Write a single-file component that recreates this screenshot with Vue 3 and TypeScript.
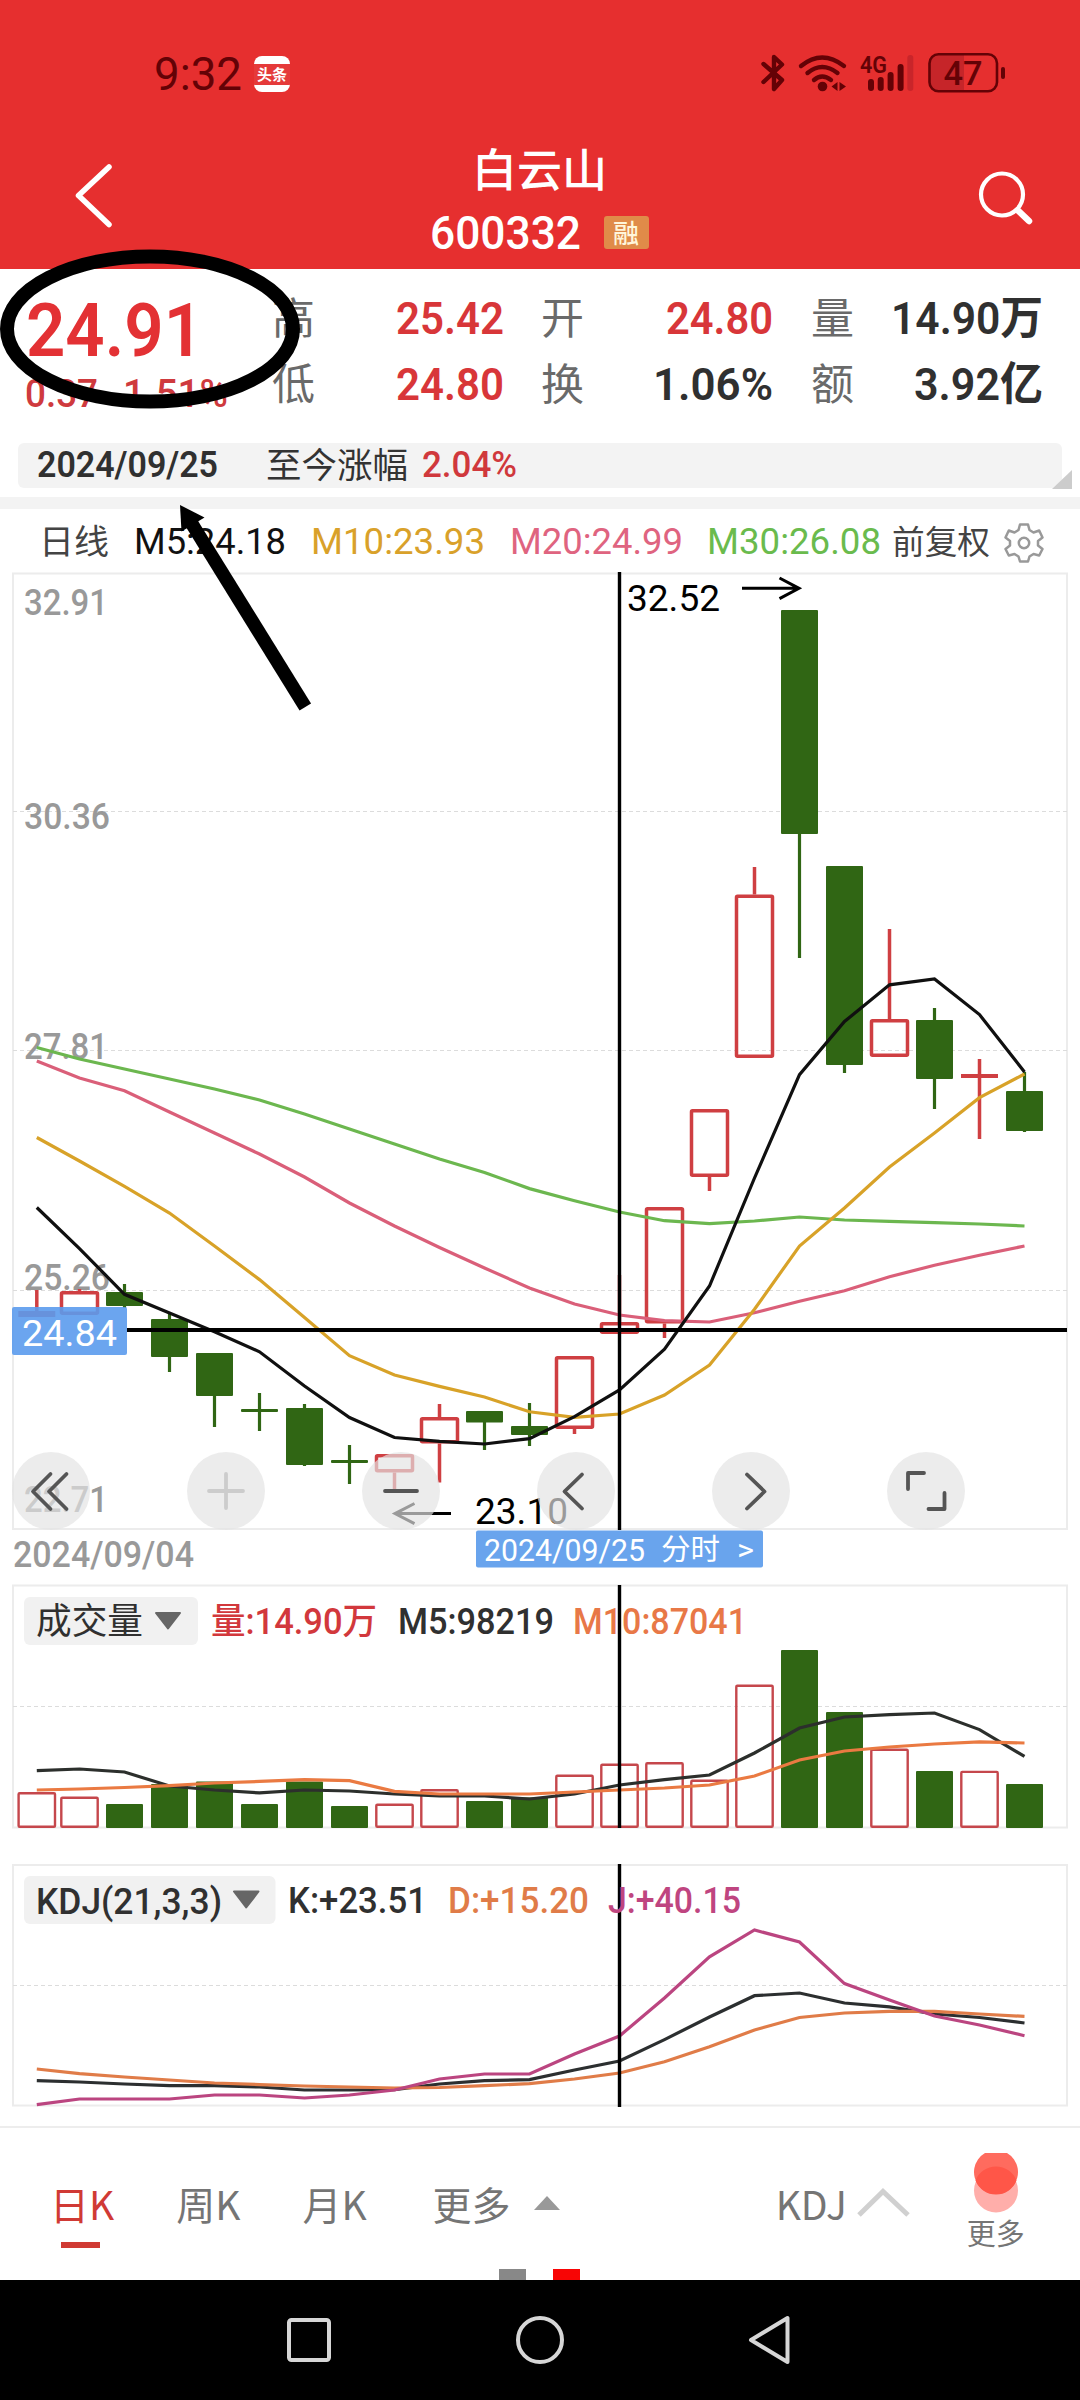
<script setup lang="ts">
import { h, type FunctionalComponent } from 'vue'

interface FitProps { text: string; size: number; w: number; weight?: number; color?: string }

// Single line of text set to an exact advance width; the box bottom is the baseline.
const FitText: FunctionalComponent<FitProps> = (p) =>
  h('svg', { width: p.w, height: Math.round(p.size * 0.72), style: 'display:block;overflow:visible;flex:none' }, [
    h('text', {
      x: 0, y: Math.round(p.size * 0.72), 'font-size': p.size, 'font-weight': p.weight ?? 500,
      fill: p.color ?? '#333', textLength: p.w, lengthAdjust: 'spacingAndGlyphs',
    }, p.text),
  ])
FitText.props = ['text', 'size', 'w', 'weight', 'color']

const RED = '#d83639'
const INK = '#303030'

interface Cell { label: string; text: string; w: number; color: string }
const quotes: Cell[][] = [
  [{ label: '高', text: '25.42', w: 108, color: RED }, { label: '低', text: '24.80', w: 108, color: RED }],
  [{ label: '开', text: '24.80', w: 107, color: RED }, { label: '换', text: '1.06%', w: 120, color: INK }],
  [{ label: '量', text: '14.90万', w: 152, color: INK }, { label: '额', text: '3.92亿', w: 129, color: INK }],
]

const legend = [
  { text: '日线', size: 34, w: 70, color: '#444', gap: 39 },
  { text: 'M5:24.18', size: 36, w: 152, color: '#111', gap: 25 },
  { text: 'M10:23.93', size: 36, w: 174, color: '#d9a12a', gap: 25 },
  { text: 'M20:24.99', size: 36, w: 173, color: '#df6480', gap: 25 },
  { text: 'M30:26.08', size: 36, w: 174, color: '#6abb4d', gap: 24 },
  { text: '前复权', size: 33, w: 98, color: '#444', gap: 11 },
]

const cx = (i: number) => (i === 0 ? 36.8 : 34.5 + 45 * i)
const pts = (ys: number[]) => ys.map((y, i) => `${cx(i)},${y}`).join(' ')

// [up, body top, body bottom, wick top, wick bottom]
type Candle = [boolean, number, number, number, number]
const candles: Candle[] = [
  [true, 1311, 1317, 1290, 1317], [true, 1291, 1315, 1289, 1315], [false, 1292, 1306, 1284, 1308],
  [false, 1319, 1357, 1313, 1372], [false, 1353, 1396, 1353, 1427], [false, 1409, 1412, 1393, 1431],
  [false, 1408, 1465, 1404, 1466], [false, 1460, 1463, 1445, 1484], [true, 1454, 1472.5, 1454, 1491],
  [true, 1417, 1443.5, 1404, 1482.5], [false, 1411, 1422.5, 1411, 1450], [false, 1426, 1435, 1403, 1446],
  [true, 1356, 1429, 1356, 1434], [true, 1322, 1334, 1275, 1334], [true, 1207, 1323.5, 1207, 1338],
  [true, 1109, 1177, 1109, 1191], [true, 894.5, 1058, 867, 1058], [false, 610, 834, 610, 958],
  [false, 866, 1065, 866, 1073], [true, 1019, 1057, 929, 1057], [false, 1020, 1079, 1008, 1109],
  [true, 1074, 1078, 1059, 1139], [false, 1091, 1131, 1072, 1132],
]

const ma = [
  { color: '#6cb74f', ys: [1047.5, 1059, 1069, 1079, 1089, 1100, 1114, 1129, 1144, 1159, 1172.5, 1188.6, 1200.7, 1212, 1220.7, 1223.7, 1221, 1217, 1220, 1221.3, 1222.7, 1224, 1226] },
  { color: '#da5f79', ys: [1061, 1078, 1090.7, 1112, 1133, 1154, 1177, 1203, 1226, 1247.5, 1268, 1288, 1304, 1315, 1320.7, 1322, 1312.7, 1301.3, 1290.7, 1276.7, 1265.3, 1255.3, 1246] },
  { color: '#d8a228', ys: [1137.5, 1161, 1186.4, 1213, 1246, 1279.6, 1317.5, 1355.7, 1375, 1386.4, 1397, 1411.8, 1417.3, 1414, 1395, 1365, 1309.3, 1246, 1208, 1167, 1133, 1097.7, 1074] },
  { color: '#101010', ys: [1207.5, 1248.6, 1294.3, 1313, 1331.8, 1351.8, 1386, 1417.5, 1437.5, 1441.4, 1444, 1438.6, 1416.7, 1390, 1349.3, 1286, 1178, 1074.7, 1021.5, 984.8, 979, 1014.6, 1072] },
]

const volTops = [1792, 1796.5, 1804, 1784, 1781.5, 1804, 1781.5, 1806, 1803.5, 1789, 1801, 1797.5, 1774.6, 1763.6, 1762, 1779.6, 1684.6, 1650, 1712, 1748.6, 1771, 1770.7, 1784]
const volLines = [
  { color: '#2c2f2c', ys: [1770.7, 1769, 1772, 1786, 1790, 1792.9, 1790, 1791, 1794, 1796, 1796, 1799, 1794, 1785, 1779.6, 1775, 1753, 1728, 1717, 1714.6, 1713, 1729.6, 1756.4] },
  { color: '#ea7a42', ys: [1790, 1789, 1787.5, 1785.7, 1783, 1781.4, 1779.6, 1780.7, 1791.4, 1794, 1794, 1794, 1792, 1790, 1788, 1785, 1776, 1760, 1751, 1747, 1744, 1741.8, 1743] },
]

const kdjLines = [
  { color: '#2c2f30', ys: [2080.7, 2082, 2084, 2085.7, 2085.7, 2087, 2090, 2090, 2089.6, 2084, 2080.7, 2079.6, 2070, 2061, 2039.6, 2017, 1995.7, 1993, 2003, 2006.8, 2014, 2017.5, 2023] },
  { color: '#e07c48', ys: [2069, 2073.6, 2077, 2080, 2083, 2084.6, 2086, 2087, 2088, 2087.5, 2085.7, 2083.6, 2079, 2073, 2061.8, 2046.8, 2030, 2017.5, 2013, 2011.4, 2011.4, 2014, 2016.4] },
  { color: '#bb4580', ys: [2104.6, 2099, 2099, 2099, 2095, 2095, 2098, 2095, 2090, 2079, 2074, 2074, 2054, 2036, 1998, 1956.8, 1930, 1942, 1983.6, 2000, 2016, 2025, 2035.7] },
]

interface Label { x: number; y: number; w: number; t: string }
const axis: Label[] = [
  { x: 24, y: 615, w: 84, t: '32.91' },
  { x: 24, y: 829, w: 86, t: '30.36' },
  { x: 24, y: 1059, w: 84, t: '27.81' },
  { x: 24, y: 1290, w: 86, t: '25.26' },
  { x: 24, y: 1512, w: 84, t: '22.71' },
]
const buttons = [51, 226, 401, 576, 751, 926]
</script>

<template>
  <div class="screen">
    <header class="top">
      <div class="status">
        <FitText text="9:32" :size="46" :w="88" :weight="400" color="#640206" />
        <span class="app-badge"><i>头条</i></span>
        <svg class="sys" width="250" height="40" viewBox="758 53 250 40" fill="none" stroke="#640206" stroke-linecap="round" stroke-linejoin="round">
          <path d="M763.5 64 L782 80 L774 89 V57 L782 64.5 L763.5 82" stroke-width="4.4" />
          <g stroke-width="4.4">
            <path d="M801 66 Q822 49 844 66" />
            <path d="M807.500 73 Q822 61 837.500 73" />
            <path d="M814 80 Q822 73 831 80" />
          </g>
          <circle cx="822.500" cy="86.500" r="4.800" fill="#640206" stroke="none" />
          <path d="M837.500 82 v9 l-6 -4.500z M839.500 82 v9 l6.500 -4.500z" fill="#640206" stroke="none" />
          <text x="860" y="73" font-size="24" font-weight="600" textLength="27" lengthAdjust="spacingAndGlyphs" fill="#640206" stroke="none">4G</text>
          <g stroke-width="6">
            <path d="M871 82V88 M880.700 80V88 M890.600 75V88 M900.600 67V88" />
            <path d="M910.300 58V88" stroke="#c9252a" />
          </g>
          <path d="M939 55h25v36h-25q-9 0-9-9v-18q0-9 9-9z" fill="#c62529" stroke="none" />
          <rect x="929.500" y="54.300" width="67.500" height="37" rx="9" stroke-width="2.600" />
          <path d="M1003 69V77" stroke-width="4" />
          <text x="943.500" y="85" font-size="33" font-weight="500" textLength="39" lengthAdjust="spacingAndGlyphs" fill="#640206" stroke="none">47</text>
        </svg>
      </div>
      <div class="navbar">
        <svg class="back" width="44" height="70" viewBox="72 160 44 70"><path d="M109 167 L78.500 195.500 L109 224.500" fill="none" stroke="#fff" stroke-width="5.500" stroke-linecap="round" stroke-linejoin="round" /></svg>
        <div class="title">
          <div class="name">白云山</div>
          <div class="code">
            <FitText text="600332" :size="46" :w="151" :weight="500" color="#fff" />
            <span class="tag">融</span>
          </div>
        </div>
        <svg class="search" width="60" height="60" viewBox="976 168 60 60" fill="none" stroke="#fff" stroke-linecap="round"><circle cx="1002" cy="194.500" r="21" stroke-width="4.200" /><path d="M1018 210.500 L1029 221" stroke-width="6.500" /></svg>
      </div>
    </header>

    <section class="quote">
      <div class="price">
        <FitText text="24.91" :size="75" :w="177" :weight="600" color="#e33134" />
        <div class="change">
          <FitText text="0.37" :size="38" :w="73" color="#cf3a3e" />
          <FitText text="1.51%" :size="38" :w="105" color="#cf3a3e" />
        </div>
      </div>
      <div v-for="(col, i) in quotes" :key="i" class="pair">
        <div v-for="c in col" :key="c.label" class="cell">
          <FitText :text="c.label" :size="43" :w="43" :weight="400" color="#6a6a6a" />
          <FitText :text="c.text" :size="45" :w="c.w" :weight="600" :color="c.color" />
        </div>
      </div>
    </section>

    <section class="since">
      <div class="strip">
        <FitText text="2024/09/25" :size="36" :w="181" :weight="600" color="#303030" />
        <FitText text="至今涨幅" :size="35" :w="142" :weight="400" color="#333" />
        <FitText text="2.04%" :size="36" :w="95" color="#d0383c" />
      </div>
      <i class="corner"></i>
    </section>
    <div class="divider"></div>

    <div class="legend">
      <FitText v-for="l in legend" :key="l.text" :text="l.text" :size="l.size" :w="l.w" :weight="400" :color="l.color" :style="{ marginLeft: l.gap + 'px' }" />
      <svg class="gear" width="42" height="42" viewBox="-21 -21 42 42" fill="none" stroke="#999" stroke-width="2.500" stroke-linejoin="round">
        <path d="M-4 -18.500 H4 L5.500 -13 L9.500 -10.500 L15.200 -12.500 L18.500 -5.500 L14 -2 V2.500 L18.500 6 L15.200 12.500 L9.500 11 L5.500 13.500 L4 18.500 H-4 L-5.500 13.500 L-9.500 11 L-15.200 12.500 L-18.500 6 L-14 2.500 V-2 L-18.500 -5.500 L-15.200 -12.500 L-9.500 -10.500 L-5.500 -13 Z" />
        <circle r="5.200" />
      </svg>
    </div>

    <svg class="panel" width="1080" height="1008" viewBox="0 569 1080 1008">
      <rect x="13" y="573.500" width="1054" height="955.500" fill="none" stroke="#ececec" stroke-width="2" />
      <path class="grid" d="M13 811.500H1067 M13 1050.500H1067 M13 1290.500H1067" />
      <text v-for="a in axis" :key="a.t" class="fit md" :x="a.x" :y="a.y" font-size="36" :textLength="a.w" lengthAdjust="spacingAndGlyphs" fill="#999">{{ a.t }}</text>
      <g v-for="(c, i) in candles" :key="i">
        <template v-if="c[0]">
          <path :d="`M${cx(i)} ${c[3]}V${c[1]} M${cx(i)} ${c[2]}V${c[4]}`" stroke="#cf3f42" stroke-width="3.500" />
          <rect v-if="c[2] - c[1] < 8" :x="cx(i) - 18.500" :y="c[1]" width="37" :height="c[2] - c[1]" fill="#cf3f42" />
          <rect v-else :x="cx(i) - 18" :y="c[1] + 1.700" width="36" :height="c[2] - c[1] - 3.400" rx="1" fill="none" stroke="#cf3f42" stroke-width="3.500" />
        </template>
        <template v-else>
          <path :d="`M${cx(i)} ${c[3]}V${c[4]}`" stroke="#306614" stroke-width="3.200" />
          <rect :x="cx(i) - 18.500" :y="c[1]" width="37" :height="c[2] - c[1]" rx="1" fill="#306614" />
        </template>
      </g>
      <polyline v-for="m in ma" :key="m.color" :points="pts(m.ys)" fill="none" :stroke="m.color" stroke-width="3.200" />

      <text class="fit" x="627" y="610.500" font-size="37" textLength="93" lengthAdjust="spacingAndGlyphs" fill="#000">32.52</text>
      <path d="M742 588.300H799 M779.500 578L799 588.300L779.500 598.600" fill="none" stroke="#000" stroke-width="3" />
      <text class="fit" x="475" y="1524" font-size="37" textLength="93" lengthAdjust="spacingAndGlyphs" fill="#000">23.10</text>
      <path d="M451 1513.600H395 M414.500 1503.500L395 1513.600L414.500 1523.700" fill="none" stroke="#000" stroke-width="3" />

      <path d="M127 1330H1067" stroke="#000" stroke-width="3.800" />
      <path d="M619.500 572V1530" stroke="#000" stroke-width="3.400" />
      <rect x="12" y="1307" width="115" height="48" rx="2" fill="#5b9bed" fill-opacity=".9" />
      <text class="fit" x="22" y="1345.500" font-size="37" textLength="95" lengthAdjust="spacingAndGlyphs" fill="#fff">24.84</text>

      <circle v-for="b in buttons" :key="b" :cx="b" cy="1491" r="39" fill="#e3e3e3" fill-opacity=".68" />
      <g fill="none" stroke="#555" stroke-width="3.800" stroke-linecap="round" stroke-linejoin="round">
        <path d="M50.500 1474L33 1491.500L50.500 1509 M66.500 1474L49 1491.500L66.500 1509" />
        <path d="M209 1491H243 M226 1474V1508" stroke="#ccc" />
        <path d="M385 1491H417" />
        <path d="M582 1474.500L564.500 1491.500L582 1508.500" />
        <path d="M747 1474.500L764.500 1491.500L747 1508.500" />
        <path d="M908 1489V1473H924 M944.500 1493V1509H928.500" />
      </g>

      <text class="fit md" x="13" y="1567" font-size="36" textLength="181" lengthAdjust="spacingAndGlyphs" fill="#999">2024/09/04</text>
      <rect x="476" y="1530.500" width="287" height="37" rx="2" fill="#69a4ed" />
      <g fill="#fff">
        <text class="fit" x="484" y="1561" font-size="31" textLength="161" lengthAdjust="spacingAndGlyphs">2024/09/25</text>
        <text class="fit" x="661" y="1560" font-size="29" textLength="59" lengthAdjust="spacingAndGlyphs">分时</text>
        <text class="fit" x="737" y="1560" font-size="30" textLength="17" lengthAdjust="spacingAndGlyphs">&gt;</text>
      </g>
    </svg>

    <svg class="panel" width="1080" height="270" viewBox="0 1577 1080 270">
      <rect x="13" y="1585.500" width="1054" height="242" fill="none" stroke="#ececec" stroke-width="2" />
      <path class="grid" d="M13 1706.500H1067" />
      <g v-for="(t, i) in volTops" :key="i">
        <rect v-if="candles[i][0]" :x="cx(i) - 18.200" :y="t + 1.200" width="36.400" :height="1828 - t - 2.400" rx="1" fill="none" stroke="#c5474c" stroke-width="2.400" />
        <rect v-else :x="cx(i) - 18.500" :y="t" width="37" :height="1828 - t" rx="1" fill="#306614" />
      </g>
      <polyline v-for="m in volLines" :key="m.color" :points="pts(m.ys)" fill="none" :stroke="m.color" stroke-width="3.200" />
      <path d="M619.500 1585V1828" stroke="#000" stroke-width="3.400" />
      <rect x="24" y="1597" width="174" height="48" rx="6" fill="#f1f1f1" />
      <text class="fit" x="36" y="1634" font-size="36" textLength="107" lengthAdjust="spacingAndGlyphs" fill="#303030">成交量</text>
      <path d="M156 1613H180L168 1628.500Z" fill="#666" stroke="#666" stroke-width="2" stroke-linejoin="round" />
      <text class="fit md" x="211" y="1634" font-size="36" textLength="166" lengthAdjust="spacingAndGlyphs" fill="#d2383c">量:14.90万</text>
      <text class="fit md" x="398" y="1634" font-size="36" textLength="156" lengthAdjust="spacingAndGlyphs" fill="#303030">M5:98219</text>
      <text class="fit md" x="573" y="1634" font-size="36" textLength="174" lengthAdjust="spacingAndGlyphs" fill="#e87847">M10:87041</text>
    </svg>

    <svg class="panel" width="1080" height="279" viewBox="0 1847 1080 279">
      <rect x="13" y="1865" width="1054" height="240.500" fill="none" stroke="#ececec" stroke-width="2" />
      <path class="grid" d="M13 1985.500H1067" />
      <polyline v-for="m in kdjLines" :key="m.color" :points="pts(m.ys)" fill="none" :stroke="m.color" stroke-width="3.200" />
      <path d="M619.500 1864V2107" stroke="#000" stroke-width="3.400" />
      <rect x="24" y="1876" width="251.500" height="48" rx="6" fill="#f1f1f1" />
      <text class="fit md" x="36" y="1913.500" font-size="36" textLength="186" lengthAdjust="spacingAndGlyphs" fill="#303030">KDJ(21,3,3)</text>
      <path d="M234 1891.500H258.500L246.200 1907.500Z" fill="#666" stroke="#666" stroke-width="2" stroke-linejoin="round" />
      <text class="fit md" x="288" y="1912.500" font-size="36" textLength="139" lengthAdjust="spacingAndGlyphs" fill="#303030">K:+23.51</text>
      <text class="fit md" x="448" y="1912.500" font-size="36" textLength="141" lengthAdjust="spacingAndGlyphs" fill="#e07c48">D:+15.20</text>
      <text class="fit md" x="608" y="1912.500" font-size="36" textLength="133" lengthAdjust="spacingAndGlyphs" fill="#bf4580">J:+40.15</text>
    </svg>

    <nav class="tabs">
      <div class="tab on">日K</div>
      <div class="tab">周K</div>
      <div class="tab">月K</div>
      <div class="tab all">更多</div>
      <svg class="caret" width="26" height="14" viewBox="0 0 26 14"><path d="M13 0L26 14H0Z" fill="#999" /></svg>
      <div class="tab kdj">KDJ</div>
      <svg class="chev" width="56" height="32" viewBox="0 0 56 32"><path d="M4 28L28 4.500L53 28" fill="none" stroke="#d0d0d0" stroke-width="5" /></svg>
      <div class="more">
        <svg width="46" height="62" viewBox="0 0 46 62">
          <circle cx="23" cy="38.500" r="22" fill="#ffaeaa" />
          <path d="M12 1H34A22 22 0 1 1 12 1Z" fill="#ff6b5e" />
          <path d="M2.500 28.500A22 22 0 0 1 43.500 28.500A22 22 0 0 1 2.500 28.500Z" fill="#ff5648" />
        </svg>
        <span>更多</span>
      </div>
      <div class="pager"><i></i><i class="cur"></i></div>
    </nav>

    <footer class="sysnav">
      <svg width="48" height="52" viewBox="-24 -26 48 52"><rect x="-20" y="-20" width="40" height="40" rx="2.500" /></svg>
      <svg width="52" height="52" viewBox="-26 -26 52 52"><circle r="22" /></svg>
      <svg width="48" height="52" viewBox="-22.500 -26 48 52"><path d="M18 -22V22L-18.500 0Z" /></svg>
    </footer>

    <svg class="marks" width="1080" height="760" viewBox="0 0 1080 760">
      <ellipse cx="150" cy="329" rx="143" ry="72.500" fill="none" stroke="#000" stroke-width="14" />
      <path d="M192 524L305.300 707" stroke="#000" stroke-width="13.500" />
      <path d="M180 505L204.500 517.500L181.500 531.500Z" />
    </svg>
  </div>
</template>

<style>
body { background: #fff; }
</style>

<style scoped>
.screen {
  position: relative;
  width: 1080px;
  height: 2400px;
  overflow: hidden;
  background: #fff;
  display: flex;
  flex-direction: column;
  font-family: Roboto, 'Noto Sans CJK SC', sans-serif;
}
.screen > * { flex: none; }
svg { display: block; }

.top { height: 269px; background: #e62f2f; }
.status { height: 92px; display: flex; align-items: flex-end; padding-left: 154px; }
.status > svg:first-child { margin-bottom: 2px; }
.app-badge {
  width: 36px; height: 36px; margin-left: 12px; border-radius: 8px; background: #fff;
  display: flex; align-items: center; overflow: hidden;
}
.app-badge i {
  flex: 1; height: 21px; background: #e53a3a; color: #fff; font: 700 15px/20px 'Noto Sans CJK SC', sans-serif; text-align: center;
}
.sys { margin-left: 468px; margin-bottom: -1px; overflow: visible; }
.navbar { height: 177px; display: flex; align-items: flex-start; justify-content: space-between; padding: 0 44px 0 72px; }
.back { margin-top: 68px; }
.search { margin-top: 76px; }
.title { padding-top: 44px; width: 220px; margin-right: 13px; }
.name { font: 500 45px/64px 'Noto Sans CJK SC', sans-serif; color: #fff; width: 220px; text-align: center; }
.code { display: flex; align-items: flex-end; margin-top: 16px; }
.tag {
  width: 45px; height: 33px; margin-left: 23px; border-radius: 3px; background: #e08b49; color: #fff6da;
  font: 500 26px/31px 'Noto Sans CJK SC', sans-serif; text-align: center; flex: none;
}

.quote { height: 174px; display: flex; padding: 33px 37px 0 26px; box-sizing: border-box; justify-content: space-between; }
.price { width: 208px; }
.change { display: flex; gap: 25px; margin: 24px 0 0 -1px; }
.pair { width: 232px; display: flex; flex-direction: column; gap: 34px; }
.cell { display: flex; align-items: flex-end; justify-content: space-between; height: 32px; }

.since { position: relative; height: 54px; padding: 0 18px; }
.strip { height: 45px; border-radius: 6px; background: #f3f3f3; display: flex; align-items: flex-end; padding: 0 0 11px 19px; box-sizing: border-box; }
.strip svg:nth-child(2) { margin-left: 48px; margin-bottom: -1px; }
.strip svg:nth-child(3) { margin-left: 14px; }
.corner {
  position: absolute; right: 8px; top: 27px; width: 20px; height: 19px; background: #ccc;
  clip-path: polygon(100% 0, 100% 100%, 0 100%);
}
.divider { height: 12px; background: #f3f3f3; }
.legend { height: 60px; padding-bottom: 15px; box-sizing: border-box; display: flex; align-items: flex-end; }
.gear { margin: 0 0 -10px 13px; }

.grid { stroke: #dcdcdc; stroke-width: 1.2; stroke-dasharray: 4 3; fill: none; }
.fit { font-weight: 400; }
.md { font-weight: 500; }

.tabs { position: relative; height: 154px; border-top: 2px solid #ededed; box-sizing: border-box; display: flex; padding-left: 50px; }
.tab { font: 400 39px/56px 'Noto Sans CJK SC', sans-serif; color: #757575; margin-top: 47px; margin-right: 62px; height: 56px; white-space: nowrap; }
.tab.on { color: #d03a35; position: relative; }
.tab.on::after { content: ''; position: absolute; left: 11px; top: 67px; width: 39px; height: 6px; background: #d03a33; }
.tab.all { margin-left: 4px; margin-right: 23px; }
.caret { margin-top: 68px; }
.tab.kdj { margin-left: 216px; margin-right: 0; }
.chev { margin: 59px 0 0 8px; }
.more { width: 70px; margin: 24px 0 0 50px; display: flex; flex-direction: column; align-items: center; }
.more span { font: 400 29px/32px 'Noto Sans CJK SC', sans-serif; color: #757575; margin-top: 2px; }
.pager { position: absolute; bottom: 0; left: 499px; display: flex; gap: 27px; }
.pager i { width: 27px; height: 11px; background: #888; }
.pager .cur { background: #f80505; }

.sysnav { height: 120px; background: #000; display: flex; justify-content: center; align-items: center; gap: 181px; }
.sysnav svg { fill: none; stroke: #d6d6d6; stroke-width: 4; stroke-linejoin: round; }

.marks { position: absolute; left: 0; top: 0; pointer-events: none; }
</style>
